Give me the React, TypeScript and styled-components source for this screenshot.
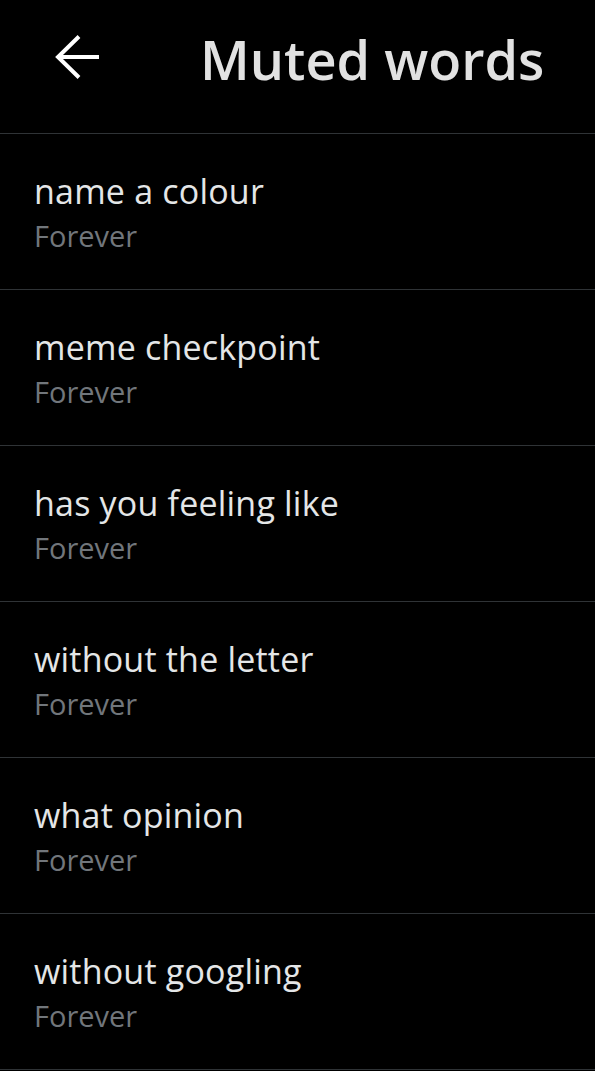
import React from 'react';
import styled, { createGlobalStyle } from 'styled-components';

const GlobalStyle = createGlobalStyle`
  html, body {
    margin: 0;
    padding: 0;
    background: #000;
  }
  body {
    font-family: "Open Sans", Roboto, "Liberation Sans", sans-serif;
    -webkit-font-smoothing: antialiased;
  }
`;

const Screen = styled.div`
  width: 595px;
  min-height: 1071px;
  background: #000;
  color: #e4e6e7;
`;

const Header = styled.header`
  height: 117px;
  display: flex;
  align-items: center;
  padding: 0 0 16px 55px;
  border-bottom: 1px solid #2f3336;
  box-sizing: content-box;
`;

const BackButton = styled.button`
  width: 44px;
  height: 44px;
  padding: 0;
  margin: 0 101px 3px 0;
  background: none;
  border: none;
  color: #fff;
  display: flex;
  cursor: pointer;
`;

const Title = styled.h1`
  margin: 0;
  font-size: 54px;
  font-weight: 600;
  color: #e2e2e2;
`;

const List = styled.ul`
  list-style: none;
  margin: 0;
  padding: 0;
`;

const Row = styled.li`
  height: 118px;
  border-bottom: 1px solid #2f3336;
  padding: 37px 34px 0;
  display: flex;
  flex-direction: column;
`;

const Word = styled.span`
  font-size: 34px;
  line-height: 40px;
  letter-spacing: 0.2px;
  color: #e4e6e7;
`;

const Duration = styled.span`
  margin-top: 5px;
  font-size: 29px;
  line-height: 40px;
  color: #71767b;
`;

const words = [
  'name a colour',
  'meme checkpoint',
  'has you feeling like',
  'without the letter',
  'what opinion',
  'without googling',
];

const App: React.FC = () => (
  <Screen>
    <GlobalStyle />
    <Header>
      <BackButton aria-label="Back">
        <svg width="44" height="44" viewBox="0 0 44 44" fill="none">
          <path d="M44 22H3M24 1.5L3 22L24 42.5" stroke="#fff" strokeWidth="4" />
        </svg>
      </BackButton>
      <Title>Muted words</Title>
    </Header>
    <List>
      {words.map(w => (
        <Row key={w}>
          <Word>{w}</Word>
          <Duration>Forever</Duration>
        </Row>
      ))}
    </List>
  </Screen>
);

export default App;
